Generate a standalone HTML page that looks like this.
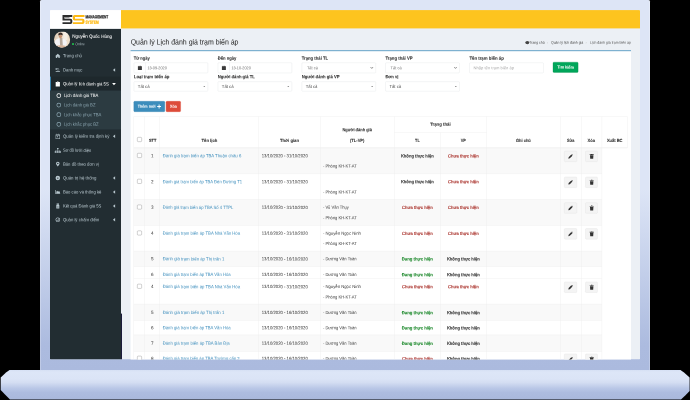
<!DOCTYPE html>
<html lang="vi">
<head>
<meta charset="utf-8">
<title>Quản lý Lịch đánh giá trạm biến áp</title>
<style>
html,body{margin:0;padding:0;background:#000;}
body{width:690px;height:400px;overflow:hidden;position:relative;font-family:"Liberation Sans",sans-serif;}
#root{position:absolute;left:0;top:0;width:690px;height:400px;overflow:hidden;background:#000;}
.frame{position:absolute;left:40px;top:0;width:610px;height:370.5px;border-radius:1.5px 1.5px 0 0;box-shadow:inset 0.6px 0 0 rgba(255,255,255,0.4),inset -0.6px 0 0 rgba(255,255,255,0.4);background:linear-gradient(to bottom,#dde5f6 0%,#dde5f6 51%,#acbbdf 93%,#abbade 100%);}
.base{position:absolute;left:0;top:369.6px;width:690px;height:30.4px;clip-path:polygon(10.2px 0,679.8px 0,684px 3px,689.6px 7.8px,689.6px 21.5px,685.5px 25.6px,681px 30px,10px 30px,5px 25px,0.7px 20.4px,0.7px 7.8px,6px 3px);background:linear-gradient(to bottom,#d6e0f4 0%,#dde6f7 7%,#dbe4f6 30%,#d3ddf2 42%,#b8c6e6 62%,#adbce0 75%,#a9b8dc 100%);}
#screen{position:absolute;left:0;top:0;display:block;font-family:"Liberation Sans",sans-serif;}
#screen{will-change:transform;}
#screen text{white-space:pre;text-rendering:geometricPrecision;}
</style>
</head>
<body>
<div id="root">
<div class="frame"></div>
<div class="base"></div>
<svg id="screen" width="690" height="400" viewBox="0 0 690 400">
<defs><clipPath id="scr"><rect x="50" y="10.1" width="590" height="349.4" rx="0.8"/></clipPath><clipPath id="avc"><circle cx="62.05" cy="39.6" r="8.1"/></clipPath><linearGradient id="avbg" x1="0" y1="0" x2="1" y2="0.25"><stop offset="0" stop-color="#d8c0a6"/><stop offset="0.45" stop-color="#efe4d5"/><stop offset="1" stop-color="#ecdcc6"/></linearGradient></defs>
<g clip-path="url(#scr)">
<rect x="50" y="10.1" width="590" height="349.4" fill="#ecf0f5"/>
<rect x="121" y="10.1" width="519" height="18.3" fill="#fdc41f"/>
<rect x="50" y="10.1" width="71" height="18.8" fill="#ffffff"/>
<rect x="50" y="28.9" width="71" height="330.6" fill="#222d32"/>
<path transform="translate(62.5 15.1) scale(0.1000)" d="M0 0H98V18H20V36H80Q98 36 98 54V71Q98 89 80 89H0V71H78V54H0Z" fill="#2d2d2d"/>
<path transform="translate(62.5 15.1) scale(0.1000)" d="M22 22H70V32H22Z" fill="#777"/>
<path transform="translate(72.8 15.1) scale(0.1000)" d="M18 0H117V18H22V36H99Q117 36 117 54V71Q117 89 99 89H0V71H95V54H18Q0 54 0 36V18Q0 0 18 0Z" fill="#fdb913"/>
<text x="85.4" y="18.3" font-size="4.3" fill="#2b2b2b" font-weight="700" textLength="22.8" lengthAdjust="spacingAndGlyphs" stroke="#2b2b2b" stroke-width="0.25" transform="rotate(0.05 85.4 18.3)">MANAGEMENT</text>
<text x="85.4" y="23.7" font-size="4.5" fill="#fdb913" font-weight="700" textLength="13.2" lengthAdjust="spacingAndGlyphs" stroke="#fdb913" stroke-width="0.25" transform="rotate(0.05 85.4 23.7)">SYSTEM</text>
<g clip-path="url(#avc)"><rect x="53.95" y="31.5" width="16.2" height="16.2" fill="url(#avbg)"/><rect x="63.5" y="31" width="4" height="9" fill="#f6f1ea" opacity="0.8"/><ellipse cx="60.6" cy="42.8" rx="6.3" ry="4.6" fill="#f3f3f5"/><path d="M59.7 38H62.3L62.8 45.8H60.1Z" fill="#a3907c" opacity="0.75"/><ellipse cx="60.5" cy="36.3" rx="1.55" ry="1.9" fill="#c4906f"/><path d="M58.3 35.6Q58.0 32.7 60.4 32.6Q63.0 32.6 62.7 35.4Q60.6 34.2 58.3 35.6Z" fill="#3a2c26"/><ellipse cx="60.8" cy="46.6" rx="4.6" ry="1.3" fill="#d6b297"/></g>
<text x="72.2" y="37.87" font-size="4.6" fill="#ffffff" textLength="39.8" lengthAdjust="spacingAndGlyphs" stroke="#ffffff" stroke-width="0.04" transform="rotate(0.05 72.2 37.87)">Nguyễn Quốc Hùng</text>
<rect x="72.0" y="43.0" width="2.0" height="2.1" rx="0.7" fill="#21b04b"/>
<text x="75.3" y="45.35" font-size="3.9" fill="#a9b8be" textLength="9.6" lengthAdjust="spacingAndGlyphs" transform="rotate(0.05 75.3 45.35)">Online</text>
<path transform="translate(55.1 53.5) scale(0.3000)" d="M9 1L0 9H2.5V15H7V10.5H11V15H15.5V9H18Z" fill="#b8c7ce" fill-rule="evenodd"/>
<text x="62.9" y="57.37" font-size="4.6" fill="#b8c7ce" textLength="19" lengthAdjust="spacingAndGlyphs" transform="rotate(0.05 62.9 57.37)">Trang chủ</text>
<path transform="translate(55.4 67.6) scale(0.3000)" d="M1 1H4V8H1ZM5 3H11V5H5ZM5 7H13V9H5ZM1 11H15V14H1Z" fill="#b8c7ce" fill-rule="evenodd"/>
<text x="62.9" y="71.47" font-size="4.6" fill="#b8c7ce" textLength="19.6" lengthAdjust="spacingAndGlyphs" transform="rotate(0.05 62.9 71.47)">Danh mục</text>
<path transform="translate(112.9 68.25) scale(0.3500)" d="M6.4 0V10L0 5Z" fill="#b8c7ce"/>
<rect x="50" y="76.6" width="71" height="14" fill="#1e282c"/>
<rect x="50" y="76.6" width="0.9" height="14" fill="#3c8dbc"/>
<path transform="translate(55.52 81.3) scale(0.3250)" d="M0.5 2.5H4.3Q4.8 0 7 0Q9.2 0 9.7 2.5H13.5V16H0.5ZM6 1.6V3.2H8V1.6Z" fill="#ffffff" fill-rule="evenodd"/>
<text x="62.9" y="85.37" font-size="4.6" fill="#ffffff" textLength="45.9" lengthAdjust="spacingAndGlyphs" transform="rotate(0.05 62.9 85.37)">Quản lý lịch đánh giá 5S</text>
<path transform="translate(112.1 82.9) scale(0.3800)" d="M0 0H10L5 6Z" fill="#ffffff"/>
<rect x="50" y="90.6" width="71" height="38.8" fill="#2c3b41"/>
<path transform="translate(56.35 93.15) scale(0.3063)" d="M8 0.4A7.6 7.6 0 1 0 8 15.6A7.6 7.6 0 1 0 8 0.4ZM8 2.7A5.3 5.3 0 1 1 8 13.3A5.3 5.3 0 1 1 8 2.7Z" fill="#ffffff" fill-rule="evenodd"/>
<text x="63.9" y="97.07" font-size="4.6" fill="#ffffff" textLength="34.5" lengthAdjust="spacingAndGlyphs" transform="rotate(0.05 63.9 97.07)">Lịch đánh giá TBA</text>
<path transform="translate(56.35 102.65) scale(0.3063)" d="M8 0.4A7.6 7.6 0 1 0 8 15.6A7.6 7.6 0 1 0 8 0.4ZM8 2.7A5.3 5.3 0 1 1 8 13.3A5.3 5.3 0 1 1 8 2.7Z" fill="#8aa4af" fill-rule="evenodd"/>
<text x="63.9" y="106.57" font-size="4.6" fill="#8aa4af" textLength="31.6" lengthAdjust="spacingAndGlyphs" transform="rotate(0.05 63.9 106.57)">Lịch đánh giá BZ</text>
<path transform="translate(56.35 112.25) scale(0.3063)" d="M8 0.4A7.6 7.6 0 1 0 8 15.6A7.6 7.6 0 1 0 8 0.4ZM8 2.7A5.3 5.3 0 1 1 8 13.3A5.3 5.3 0 1 1 8 2.7Z" fill="#8aa4af" fill-rule="evenodd"/>
<text x="63.9" y="116.17" font-size="4.6" fill="#8aa4af" textLength="37.5" lengthAdjust="spacingAndGlyphs" transform="rotate(0.05 63.9 116.17)">Lịch khắc phục TBA</text>
<path transform="translate(56.35 121.85) scale(0.3063)" d="M8 0.4A7.6 7.6 0 1 0 8 15.6A7.6 7.6 0 1 0 8 0.4ZM8 2.7A5.3 5.3 0 1 1 8 13.3A5.3 5.3 0 1 1 8 2.7Z" fill="#8aa4af" fill-rule="evenodd"/>
<text x="63.9" y="125.77" font-size="4.6" fill="#8aa4af" textLength="34.8" lengthAdjust="spacingAndGlyphs" transform="rotate(0.05 63.9 125.77)">Lịch khắc phục BZ</text>
<path transform="translate(55.35 133.7) scale(0.3059)" d="M1 2.4H15V17H1ZM2.5 5.6V15.5H13.5V5.6ZM5.2 8.2H8.4V11.4H5.2ZM4 0.4H5.7V3.4H4ZM10.3 0.4H12V3.4H10.3Z" fill="#b8c7ce" fill-rule="evenodd"/>
<text x="62.9" y="137.77" font-size="4.6" fill="#b8c7ce" textLength="46.5" lengthAdjust="spacingAndGlyphs" transform="rotate(0.05 62.9 137.77)">Quản lý kiểm tra định kỳ</text>
<path transform="translate(112.9 134.55) scale(0.3500)" d="M6.4 0V10L0 5Z" fill="#b8c7ce"/>
<path transform="translate(54.74 147.95) scale(0.3063)" d="M7.6 0H12.4V4.6H10.6V7.2H17.6V10.4H20V16H14.2V10.4H16.4V8.4H10.6V10.4H12.9V16H7.1V10.4H9.4V8.4H3.6V10.4H5.8V16H0V10.4H2.4V7.2H9.4V4.6H7.6Z" fill="#b8c7ce" fill-rule="evenodd"/>
<text x="62.9" y="151.87" font-size="4.6" fill="#b8c7ce" textLength="28.5" lengthAdjust="spacingAndGlyphs" transform="rotate(0.05 62.9 151.87)">Sơ đồ lưới điện</text>
<path transform="translate(56 161.8) scale(0.3000)" d="M6 0A6 6 0 0 1 12 6Q12 9 6 16Q0 9 0 6A6 6 0 0 1 6 0ZM6 3.5A2.5 2.5 0 1 0 6 8.5A2.5 2.5 0 1 0 6 3.5Z" fill="#b8c7ce" fill-rule="evenodd"/>
<text x="62.9" y="165.67" font-size="4.6" fill="#b8c7ce" textLength="36" lengthAdjust="spacingAndGlyphs" transform="rotate(0.05 62.9 165.67)">Bản đồ theo đơn vị</text>
<path transform="translate(55.4 175.7) scale(0.3000)" d="M8 0.5A7.5 7.5 0 1 0 8 15.5A7.5 7.5 0 1 0 8 0.5ZM8 5.6A2.4 2.4 0 1 1 8 10.4A2.4 2.4 0 1 1 8 5.6Z" fill="#b8c7ce" fill-rule="evenodd"/>
<text x="62.9" y="179.57" font-size="4.6" fill="#b8c7ce" textLength="33.5" lengthAdjust="spacingAndGlyphs" transform="rotate(0.05 62.9 179.57)">Quản trị hệ thống</text>
<path transform="translate(112.9 176.35) scale(0.3500)" d="M6.4 0V10L0 5Z" fill="#b8c7ce"/>
<path transform="translate(55.4 189.6) scale(0.3000)" d="M0 1H2V13H16V15H0ZM3 12V7L6 4L9 7L12 5L15 8V12Z" fill="#b8c7ce" fill-rule="evenodd"/>
<text x="62.9" y="193.47" font-size="4.6" fill="#b8c7ce" textLength="38.5" lengthAdjust="spacingAndGlyphs" transform="rotate(0.05 62.9 193.47)">Báo cáo và thống kê</text>
<path transform="translate(112.9 190.25) scale(0.3500)" d="M6.4 0V10L0 5Z" fill="#b8c7ce"/>
<path transform="translate(56 203.6) scale(0.3000)" d="M2 0H10V4H2ZM1 5H11V16H1ZM3 8V9H9V8ZM3 11V12H9V11Z" fill="#b8c7ce" fill-rule="evenodd"/>
<text x="62.9" y="207.47" font-size="4.6" fill="#b8c7ce" textLength="38.5" lengthAdjust="spacingAndGlyphs" transform="rotate(0.05 62.9 207.47)">Kết quả Đánh giá 5S</text>
<path transform="translate(112.9 204.25) scale(0.3500)" d="M6.4 0V10L0 5Z" fill="#b8c7ce"/>
<path transform="translate(55.4 217.4) scale(0.3000)" d="M8 0.4A7.6 7.6 0 1 0 8 15.6A7.6 7.6 0 1 0 8 0.4ZM8 2.4A5.6 5.6 0 1 1 8 13.6A5.6 5.6 0 1 1 8 2.4ZM11.3 3.3L12.7 4.7L8.7 8.7L7.3 7.3ZM3.5 10.2H12.5V11.8H3.5Z" fill="#b8c7ce" fill-rule="evenodd"/>
<text x="62.9" y="221.27" font-size="4.6" fill="#b8c7ce" textLength="36.5" lengthAdjust="spacingAndGlyphs" transform="rotate(0.05 62.9 221.27)">Quản lý chấm điểm</text>
<path transform="translate(112.9 218.05) scale(0.3500)" d="M6.4 0V10L0 5Z" fill="#b8c7ce"/>
<text x="130.7" y="44.53" font-size="7.6" fill="#333" textLength="107.8" lengthAdjust="spacingAndGlyphs" stroke="#333" stroke-width="0.06" transform="rotate(0.05 130.7 44.53)">Quản lý Lịch đánh giá trạm biến áp</text>
<ellipse cx="527.3" cy="42.6" rx="2.0" ry="1.6" fill="#444"/>
<text x="529.3" y="43.78" font-size="3.7" fill="#444" textLength="15.3" lengthAdjust="spacingAndGlyphs" transform="rotate(0.05 529.3 43.78)">Trang chủ</text>
<text x="546.8" y="43.68" font-size="3.7" fill="#bbb" transform="rotate(0.05 546.8 43.68)">›</text>
<text x="551" y="43.78" font-size="3.7" fill="#444" textLength="32.3" lengthAdjust="spacingAndGlyphs" transform="rotate(0.05 551 43.78)">Quản lý lịch đánh giá</text>
<text x="585.6" y="43.68" font-size="3.7" fill="#bbb" transform="rotate(0.05 585.6 43.68)">›</text>
<text x="590" y="43.78" font-size="3.7" fill="#555" textLength="41" lengthAdjust="spacingAndGlyphs" transform="rotate(0.05 590 43.78)">Lịch đánh giá trạm biến áp</text>
<rect x="130.6" y="50.9" width="500.4" height="310.6" fill="#ffffff"/>
<rect x="130.6" y="50.1" width="500.4" height="1.1" fill="#72aacd"/>
<text x="133.8" y="59.67" font-size="4.6" fill="#333" font-weight="700" textLength="16" lengthAdjust="spacingAndGlyphs" stroke="#333" stroke-width="0.07" transform="rotate(0.05 133.8 59.67)">Từ ngày</text>
<rect x="133.95" y="62.75" width="73.9" height="10.2" fill="#fff" rx="0.7" stroke="#dadde3" stroke-width="0.31"/>
<rect x="145.35" y="62.6" width="0.31" height="10.5" fill="#dadde3"/>
<path transform="translate(137.9 65.65) scale(0.2850)" d="M0 2H14V15H0ZM3 0H5V3H3ZM9 0H11V3H9Z" fill="#3a3a3a"/>
<text x="147.4" y="69.23" font-size="4" fill="#666" textLength="19.4" lengthAdjust="spacingAndGlyphs" transform="rotate(0.05 147.4 69.23)">13-09-2020</text>
<text x="217.8" y="59.67" font-size="4.6" fill="#333" font-weight="700" textLength="18.6" lengthAdjust="spacingAndGlyphs" stroke="#333" stroke-width="0.07" transform="rotate(0.05 217.8 59.67)">Đến ngày</text>
<rect x="217.95" y="62.75" width="73.9" height="10.2" fill="#fff" rx="0.7" stroke="#dadde3" stroke-width="0.31"/>
<rect x="229.35" y="62.6" width="0.31" height="10.5" fill="#dadde3"/>
<path transform="translate(221.9 65.65) scale(0.2850)" d="M0 2H14V15H0ZM3 0H5V3H3ZM9 0H11V3H9Z" fill="#3a3a3a"/>
<text x="231.4" y="69.23" font-size="4" fill="#666" textLength="19.4" lengthAdjust="spacingAndGlyphs" transform="rotate(0.05 231.4 69.23)">13-10-2020</text>
<text x="301.7" y="59.67" font-size="4.6" fill="#333" font-weight="700" textLength="26.5" lengthAdjust="spacingAndGlyphs" stroke="#333" stroke-width="0.07" transform="rotate(0.05 301.7 59.67)">Trạng thái TL</text>
<rect x="301.85" y="62.75" width="73.9" height="10.2" fill="#fff" rx="0.7" stroke="#dadde3" stroke-width="0.31"/>
<text x="306.9" y="69.34" font-size="4.2" fill="#777" textLength="11" lengthAdjust="spacingAndGlyphs" transform="rotate(0.05 306.9 69.34)">Tất cả</text>
<path transform="translate(370.5 67.05) scale(0.26)" d="M0.8 0.8L5 5L9.2 0.8" fill="none" stroke="#222" stroke-width="2.4"/>
<text x="385.4" y="59.67" font-size="4.6" fill="#333" font-weight="700" textLength="27.3" lengthAdjust="spacingAndGlyphs" stroke="#333" stroke-width="0.07" transform="rotate(0.05 385.4 59.67)">Trạng thái VP</text>
<rect x="385.55" y="62.75" width="73.9" height="10.2" fill="#fff" rx="0.7" stroke="#dadde3" stroke-width="0.31"/>
<text x="390.6" y="69.34" font-size="4.2" fill="#777" textLength="11" lengthAdjust="spacingAndGlyphs" transform="rotate(0.05 390.6 69.34)">Tất cả</text>
<path transform="translate(454.2 67.05) scale(0.26)" d="M0.8 0.8L5 5L9.2 0.8" fill="none" stroke="#222" stroke-width="2.4"/>
<text x="469.4" y="59.67" font-size="4.6" fill="#333" font-weight="700" textLength="34.5" lengthAdjust="spacingAndGlyphs" stroke="#333" stroke-width="0.07" transform="rotate(0.05 469.4 59.67)">Tên trạm biến áp</text>
<rect x="469.55" y="62.75" width="73.9" height="10.2" fill="#fff" rx="0.7" stroke="#dadde3" stroke-width="0.31"/>
<text x="473.5" y="69.23" font-size="4" fill="#aaa" textLength="40.5" lengthAdjust="spacingAndGlyphs" transform="rotate(0.05 473.5 69.23)">Nhập tên trạm biến áp</text>
<rect x="553" y="62.2" width="25.1" height="10.2" fill="#00a65a" rx="0.9" stroke="#008d4c" stroke-width="0.3"/>
<text x="565.55" y="68.64" font-size="4.2" fill="#fff" font-weight="700" text-anchor="middle" textLength="16.6" lengthAdjust="spacingAndGlyphs" stroke="#fff" stroke-width="0.03" transform="rotate(0.05 565.55 68.64)">Tìm kiếm</text>
<text x="133.8" y="78.17" font-size="4.6" fill="#333" font-weight="700" textLength="35.7" lengthAdjust="spacingAndGlyphs" stroke="#333" stroke-width="0.07" transform="rotate(0.05 133.8 78.17)">Loại trạm biến áp</text>
<rect x="133.95" y="81.65" width="73.9" height="9.6" fill="#fff" rx="0.7" stroke="#dadde3" stroke-width="0.31"/>
<text x="137.8" y="88.01" font-size="4.4" fill="#444" textLength="11.8" lengthAdjust="spacingAndGlyphs" transform="rotate(0.05 137.8 88.01)">Tất cả</text>
<path transform="translate(203.3 86.05) scale(0.1900)" d="M0 0H10L5 5Z" fill="#666"/>
<text x="217.8" y="78.17" font-size="4.6" fill="#333" font-weight="700" textLength="37" lengthAdjust="spacingAndGlyphs" stroke="#333" stroke-width="0.07" transform="rotate(0.05 217.8 78.17)">Người đánh giá TL</text>
<rect x="217.95" y="81.65" width="73.9" height="9.6" fill="#fff" rx="0.7" stroke="#dadde3" stroke-width="0.31"/>
<text x="221.8" y="88.01" font-size="4.4" fill="#444" textLength="11.8" lengthAdjust="spacingAndGlyphs" transform="rotate(0.05 221.8 88.01)">Tất cả</text>
<path transform="translate(287.3 86.05) scale(0.1900)" d="M0 0H10L5 5Z" fill="#666"/>
<text x="301.7" y="78.17" font-size="4.6" fill="#333" font-weight="700" textLength="37.8" lengthAdjust="spacingAndGlyphs" stroke="#333" stroke-width="0.07" transform="rotate(0.05 301.7 78.17)">Người đánh giá VP</text>
<rect x="301.85" y="81.65" width="73.9" height="9.6" fill="#fff" rx="0.7" stroke="#dadde3" stroke-width="0.31"/>
<text x="305.7" y="88.01" font-size="4.4" fill="#444" textLength="11.8" lengthAdjust="spacingAndGlyphs" transform="rotate(0.05 305.7 88.01)">Tất cả</text>
<path transform="translate(371.2 86.05) scale(0.1900)" d="M0 0H10L5 5Z" fill="#666"/>
<text x="385.4" y="78.17" font-size="4.6" fill="#333" font-weight="700" textLength="13" lengthAdjust="spacingAndGlyphs" stroke="#333" stroke-width="0.07" transform="rotate(0.05 385.4 78.17)">Đơn vị</text>
<rect x="385.55" y="81.65" width="73.9" height="9.6" fill="#fff" rx="0.7" stroke="#dadde3" stroke-width="0.31"/>
<text x="389.4" y="88.01" font-size="4.4" fill="#444" textLength="11.8" lengthAdjust="spacingAndGlyphs" transform="rotate(0.05 389.4 88.01)">Tất cả</text>
<path transform="translate(454.9 86.05) scale(0.1900)" d="M0 0H10L5 5Z" fill="#666"/>
<rect x="133.8" y="101.3" width="31" height="10.4" fill="#3c8dbc" rx="0.9" stroke="#367fa9" stroke-width="0.3"/>
<text x="137.8" y="107.84" font-size="4.2" fill="#fff" font-weight="700" textLength="17.8" lengthAdjust="spacingAndGlyphs" stroke="#fff" stroke-width="0.03" transform="rotate(0.05 137.8 107.84)">Thêm mới</text>
<path transform="translate(157.2 104.6) scale(0.3800)" d="M3.8 0H6.2V3.8H10V6.2H6.2V10H3.8V6.2H0V3.8H3.8Z" fill="#fff"/>
<rect x="166.1" y="101.3" width="14.5" height="10.4" fill="#dd4b39" rx="0.9" stroke="#d73925" stroke-width="0.3"/>
<text x="173.35" y="107.84" font-size="4.2" fill="#fff" font-weight="700" text-anchor="middle" textLength="6.8" lengthAdjust="spacingAndGlyphs" stroke="#fff" stroke-width="0.03" transform="rotate(0.05 173.35 107.84)">Xóa</text>
<rect x="133.8" y="116.3" width="493.5" height="0.4" fill="#ededed"/>
<rect x="133.8" y="147.45" width="493.5" height="0.8" fill="#eeeeee"/>
<rect x="394.3" y="132.4" width="92.3" height="0.4" fill="#ededed"/>
<text x="152.6" y="141.81" font-size="4.1" fill="#333" font-weight="700" text-anchor="middle" textLength="7.3" lengthAdjust="spacingAndGlyphs" stroke="#333" stroke-width="0.14" transform="rotate(0.05 152.6 141.81)">STT</text>
<rect x="137.35" y="137.35" width="4.3" height="4.3" fill="#fff" rx="0.8" stroke="#767676" stroke-width="0.33"/>
<text x="209.4" y="141.94" font-size="4.5" fill="#333" font-weight="700" text-anchor="middle" textLength="15.7" lengthAdjust="spacingAndGlyphs" stroke="#333" stroke-width="0.07" transform="rotate(0.05 209.4 141.94)">Tên lịch</text>
<text x="289.5" y="141.94" font-size="4.5" fill="#333" font-weight="700" text-anchor="middle" textLength="19" lengthAdjust="spacingAndGlyphs" stroke="#333" stroke-width="0.07" transform="rotate(0.05 289.5 141.94)">Thời gian</text>
<text x="357.2" y="131.24" font-size="4.5" fill="#333" font-weight="700" text-anchor="middle" textLength="29.5" lengthAdjust="spacingAndGlyphs" stroke="#333" stroke-width="0.07" transform="rotate(0.05 357.2 131.24)">Người đánh giá</text>
<text x="357.2" y="141.94" font-size="4.5" fill="#333" font-weight="700" text-anchor="middle" textLength="14.5" lengthAdjust="spacingAndGlyphs" stroke="#333" stroke-width="0.07" transform="rotate(0.05 357.2 141.94)">(TL-VP)</text>
<text x="440.4" y="125.74" font-size="4.5" fill="#333" font-weight="700" text-anchor="middle" textLength="20.5" lengthAdjust="spacingAndGlyphs" stroke="#333" stroke-width="0.07" transform="rotate(0.05 440.4 125.74)">Trạng thái</text>
<text x="417.4" y="141.94" font-size="4.5" fill="#333" font-weight="700" text-anchor="middle" textLength="4.6" lengthAdjust="spacingAndGlyphs" stroke="#333" stroke-width="0.07" transform="rotate(0.05 417.4 141.94)">TL</text>
<text x="463.3" y="141.94" font-size="4.5" fill="#333" font-weight="700" text-anchor="middle" textLength="5.2" lengthAdjust="spacingAndGlyphs" stroke="#333" stroke-width="0.07" transform="rotate(0.05 463.3 141.94)">VP</text>
<text x="523.4" y="141.94" font-size="4.5" fill="#333" font-weight="700" text-anchor="middle" textLength="14.8" lengthAdjust="spacingAndGlyphs" stroke="#333" stroke-width="0.07" transform="rotate(0.05 523.4 141.94)">Ghi chú</text>
<text x="570.7" y="141.94" font-size="4.5" fill="#333" font-weight="700" text-anchor="middle" textLength="7.4" lengthAdjust="spacingAndGlyphs" stroke="#333" stroke-width="0.07" transform="rotate(0.05 570.7 141.94)">Sửa</text>
<text x="591.3" y="141.94" font-size="4.5" fill="#333" font-weight="700" text-anchor="middle" textLength="7.4" lengthAdjust="spacingAndGlyphs" stroke="#333" stroke-width="0.07" transform="rotate(0.05 591.3 141.94)">Xóa</text>
<text x="614.7" y="141.94" font-size="4.5" fill="#333" font-weight="700" text-anchor="middle" textLength="15.6" lengthAdjust="spacingAndGlyphs" stroke="#333" stroke-width="0.07" transform="rotate(0.05 614.7 141.94)">Xuất BC</text>
<rect x="133.8" y="148.1" width="468.1" height="25.75" fill="#f9f9f9"/>
<rect x="133.8" y="147.9" width="468.1" height="0.4" fill="#ededed"/>
<rect x="137.35" y="153.3" width="4.3" height="4.3" fill="#fff" rx="0.8" stroke="#767676" stroke-width="0.33"/>
<text x="152.2" y="157.27" font-size="4.6" fill="#333" text-anchor="middle" transform="rotate(0.05 152.2 157.27)">1</text>
<text x="162.7" y="157.27" font-size="4.6" fill="#3c8dbc" textLength="78.6" lengthAdjust="spacingAndGlyphs" transform="rotate(0.05 162.7 157.27)">Đánh giá trạm biến áp TBA Thuận châu 6</text>
<text x="261.7" y="157.27" font-size="4.6" fill="#333" textLength="46.1" lengthAdjust="spacingAndGlyphs" transform="rotate(0.05 261.7 157.27)">13/10/2020 - 31/10/2020</text>
<text x="322.9" y="167.59" font-size="4.5" fill="#333" textLength="33.9" lengthAdjust="spacingAndGlyphs" transform="rotate(0.05 322.9 167.59)">- Phòng KH-KT-AT</text>
<text x="417.35" y="157.47" font-size="4.6" fill="#333" font-weight="700" text-anchor="middle" textLength="32.9" lengthAdjust="spacingAndGlyphs" stroke="#333" stroke-width="0.07" transform="rotate(0.05 417.35 157.47)">Không thực hiện</text>
<text x="463.35" y="157.47" font-size="4.6" fill="#ad3a34" font-weight="700" text-anchor="middle" textLength="30.6" lengthAdjust="spacingAndGlyphs" stroke="#ad3a34" stroke-width="0.07" transform="rotate(0.05 463.35 157.47)">Chưa thực hiện</text>
<rect x="564.3" y="151.1" width="12.5" height="10.6" fill="#f4f4f4" rx="0.9" stroke="#ddd" stroke-width="0.31"/>
<path transform="translate(568.3 154.1) scale(0.3800)" d="M0 12L0.9 8L7.9 1L11 4.1L4 11.1ZM8.7 0.4Q9.6 -0.4 10.5 0.4L11.6 1.5Q12.4 2.4 11.6 3.3L8.7 0.4Z" fill="#333"/>
<rect x="585.45" y="151.1" width="12" height="10.6" fill="#f4f4f4" rx="0.9" stroke="#ddd" stroke-width="0.31"/>
<path transform="translate(589.65 153.9) scale(0.4100)" d="M3.5 0H6.5L7 1H10V2.6H0V1H3ZM0.8 3.4H9.2L8.6 12H1.4Z" fill="#333"/>
<rect x="133.8" y="173.65" width="468.1" height="0.4" fill="#ededed"/>
<rect x="137.35" y="179.2" width="4.3" height="4.3" fill="#fff" rx="0.8" stroke="#767676" stroke-width="0.33"/>
<text x="152.2" y="183.17" font-size="4.6" fill="#333" text-anchor="middle" transform="rotate(0.05 152.2 183.17)">2</text>
<text x="162.7" y="183.17" font-size="4.6" fill="#3c8dbc" textLength="79.4" lengthAdjust="spacingAndGlyphs" transform="rotate(0.05 162.7 183.17)">Đánh giá trạm biến áp TBA Đèn Đường T1</text>
<text x="261.7" y="183.17" font-size="4.6" fill="#333" textLength="46.1" lengthAdjust="spacingAndGlyphs" transform="rotate(0.05 261.7 183.17)">13/10/2020 - 31/10/2020</text>
<text x="322.9" y="193.49" font-size="4.5" fill="#333" textLength="33.9" lengthAdjust="spacingAndGlyphs" transform="rotate(0.05 322.9 193.49)">- Phòng KH-KT-AT</text>
<text x="417.35" y="183.37" font-size="4.6" fill="#333" font-weight="700" text-anchor="middle" textLength="32.9" lengthAdjust="spacingAndGlyphs" stroke="#333" stroke-width="0.07" transform="rotate(0.05 417.35 183.37)">Không thực hiện</text>
<text x="463.35" y="183.37" font-size="4.6" fill="#ad3a34" font-weight="700" text-anchor="middle" textLength="30.6" lengthAdjust="spacingAndGlyphs" stroke="#ad3a34" stroke-width="0.07" transform="rotate(0.05 463.35 183.37)">Chưa thực hiện</text>
<rect x="564.3" y="177" width="12.5" height="10.6" fill="#f4f4f4" rx="0.9" stroke="#ddd" stroke-width="0.31"/>
<path transform="translate(568.3 180) scale(0.3800)" d="M0 12L0.9 8L7.9 1L11 4.1L4 11.1ZM8.7 0.4Q9.6 -0.4 10.5 0.4L11.6 1.5Q12.4 2.4 11.6 3.3L8.7 0.4Z" fill="#333"/>
<rect x="585.45" y="177" width="12" height="10.6" fill="#f4f4f4" rx="0.9" stroke="#ddd" stroke-width="0.31"/>
<path transform="translate(589.65 179.8) scale(0.4100)" d="M3.5 0H6.5L7 1H10V2.6H0V1H3ZM0.8 3.4H9.2L8.6 12H1.4Z" fill="#333"/>
<rect x="133.8" y="199.5" width="468.1" height="25.9" fill="#f9f9f9"/>
<rect x="133.8" y="199.3" width="468.1" height="0.4" fill="#ededed"/>
<rect x="137.35" y="204.9" width="4.3" height="4.3" fill="#fff" rx="0.8" stroke="#767676" stroke-width="0.33"/>
<text x="152.2" y="208.87" font-size="4.6" fill="#333" text-anchor="middle" transform="rotate(0.05 152.2 208.87)">3</text>
<text x="162.7" y="208.87" font-size="4.6" fill="#3c8dbc" textLength="70.6" lengthAdjust="spacingAndGlyphs" transform="rotate(0.05 162.7 208.87)">Đánh giá trạm biến áp TBA Số 4 TTPL</text>
<text x="261.7" y="208.87" font-size="4.6" fill="#333" textLength="46.1" lengthAdjust="spacingAndGlyphs" transform="rotate(0.05 261.7 208.87)">13/10/2020 - 31/10/2020</text>
<text x="322.9" y="208.84" font-size="4.5" fill="#333" textLength="26" lengthAdjust="spacingAndGlyphs" transform="rotate(0.05 322.9 208.84)">- Vũ Văn Thụy</text>
<text x="322.9" y="219.19" font-size="4.5" fill="#333" textLength="33.9" lengthAdjust="spacingAndGlyphs" transform="rotate(0.05 322.9 219.19)">- Phòng KH-KT-AT</text>
<text x="417.35" y="209.07" font-size="4.6" fill="#ad3a34" font-weight="700" text-anchor="middle" textLength="30.6" lengthAdjust="spacingAndGlyphs" stroke="#ad3a34" stroke-width="0.07" transform="rotate(0.05 417.35 209.07)">Chưa thực hiện</text>
<text x="463.35" y="209.07" font-size="4.6" fill="#ad3a34" font-weight="700" text-anchor="middle" textLength="30.6" lengthAdjust="spacingAndGlyphs" stroke="#ad3a34" stroke-width="0.07" transform="rotate(0.05 463.35 209.07)">Chưa thực hiện</text>
<rect x="564.3" y="202.7" width="12.5" height="10.6" fill="#f4f4f4" rx="0.9" stroke="#ddd" stroke-width="0.31"/>
<path transform="translate(568.3 205.7) scale(0.3800)" d="M0 12L0.9 8L7.9 1L11 4.1L4 11.1ZM8.7 0.4Q9.6 -0.4 10.5 0.4L11.6 1.5Q12.4 2.4 11.6 3.3L8.7 0.4Z" fill="#333"/>
<rect x="585.45" y="202.7" width="12" height="10.6" fill="#f4f4f4" rx="0.9" stroke="#ddd" stroke-width="0.31"/>
<path transform="translate(589.65 205.5) scale(0.4100)" d="M3.5 0H6.5L7 1H10V2.6H0V1H3ZM0.8 3.4H9.2L8.6 12H1.4Z" fill="#333"/>
<rect x="133.8" y="225.2" width="468.1" height="0.4" fill="#ededed"/>
<rect x="137.35" y="230.8" width="4.3" height="4.3" fill="#fff" rx="0.8" stroke="#767676" stroke-width="0.33"/>
<text x="152.2" y="234.77" font-size="4.6" fill="#333" text-anchor="middle" transform="rotate(0.05 152.2 234.77)">4</text>
<text x="162.7" y="234.77" font-size="4.6" fill="#3c8dbc" textLength="77.4" lengthAdjust="spacingAndGlyphs" transform="rotate(0.05 162.7 234.77)">Đánh giá trạm biến áp TBA Nhà Văn Hóa</text>
<text x="261.7" y="234.77" font-size="4.6" fill="#333" textLength="46.1" lengthAdjust="spacingAndGlyphs" transform="rotate(0.05 261.7 234.77)">13/10/2020 - 31/10/2020</text>
<text x="322.9" y="234.74" font-size="4.5" fill="#333" textLength="38" lengthAdjust="spacingAndGlyphs" transform="rotate(0.05 322.9 234.74)">- Nguyễn Ngọc Ninh</text>
<text x="322.9" y="245.09" font-size="4.5" fill="#333" textLength="33.9" lengthAdjust="spacingAndGlyphs" transform="rotate(0.05 322.9 245.09)">- Phòng KH-KT-AT</text>
<text x="417.35" y="234.97" font-size="4.6" fill="#ad3a34" font-weight="700" text-anchor="middle" textLength="30.6" lengthAdjust="spacingAndGlyphs" stroke="#ad3a34" stroke-width="0.07" transform="rotate(0.05 417.35 234.97)">Chưa thực hiện</text>
<text x="463.35" y="234.97" font-size="4.6" fill="#ad3a34" font-weight="700" text-anchor="middle" textLength="30.6" lengthAdjust="spacingAndGlyphs" stroke="#ad3a34" stroke-width="0.07" transform="rotate(0.05 463.35 234.97)">Chưa thực hiện</text>
<rect x="564.3" y="228.6" width="12.5" height="10.6" fill="#f4f4f4" rx="0.9" stroke="#ddd" stroke-width="0.31"/>
<path transform="translate(568.3 231.6) scale(0.3800)" d="M0 12L0.9 8L7.9 1L11 4.1L4 11.1ZM8.7 0.4Q9.6 -0.4 10.5 0.4L11.6 1.5Q12.4 2.4 11.6 3.3L8.7 0.4Z" fill="#333"/>
<rect x="585.45" y="228.6" width="12" height="10.6" fill="#f4f4f4" rx="0.9" stroke="#ddd" stroke-width="0.31"/>
<path transform="translate(589.65 231.4) scale(0.4100)" d="M3.5 0H6.5L7 1H10V2.6H0V1H3ZM0.8 3.4H9.2L8.6 12H1.4Z" fill="#333"/>
<rect x="133.8" y="251.1" width="468.1" height="15.4" fill="#f9f9f9"/>
<rect x="133.8" y="250.9" width="468.1" height="0.4" fill="#ededed"/>
<text x="152.2" y="260.37" font-size="4.6" fill="#333" text-anchor="middle" transform="rotate(0.05 152.2 260.37)">5</text>
<text x="162.7" y="260.37" font-size="4.6" fill="#3c8dbc" textLength="61.6" lengthAdjust="spacingAndGlyphs" transform="rotate(0.05 162.7 260.37)">Đánh giá trạm biến áp Thị trấn 1</text>
<text x="261.7" y="260.37" font-size="4.6" fill="#333" textLength="46.1" lengthAdjust="spacingAndGlyphs" transform="rotate(0.05 261.7 260.37)">13/10/2020 - 16/10/2020</text>
<text x="322.9" y="260.34" font-size="4.5" fill="#333" textLength="33.6" lengthAdjust="spacingAndGlyphs" transform="rotate(0.05 322.9 260.34)">- Dương Văn Toàn</text>
<text x="417.35" y="260.57" font-size="4.6" fill="#1f8a2e" font-weight="700" text-anchor="middle" textLength="31.2" lengthAdjust="spacingAndGlyphs" stroke="#1f8a2e" stroke-width="0.07" transform="rotate(0.05 417.35 260.57)">Đang thực hiện</text>
<text x="463.35" y="260.57" font-size="4.6" fill="#333" font-weight="700" text-anchor="middle" textLength="32.9" lengthAdjust="spacingAndGlyphs" stroke="#333" stroke-width="0.07" transform="rotate(0.05 463.35 260.57)">Không thực hiện</text>
<rect x="133.8" y="266.3" width="468.1" height="0.4" fill="#ededed"/>
<text x="152.2" y="276.07" font-size="4.6" fill="#333" text-anchor="middle" transform="rotate(0.05 152.2 276.07)">6</text>
<text x="162.7" y="276.07" font-size="4.6" fill="#3c8dbc" textLength="68" lengthAdjust="spacingAndGlyphs" transform="rotate(0.05 162.7 276.07)">Đánh giá trạm biến áp TBA Văn Hóa</text>
<text x="261.7" y="276.07" font-size="4.6" fill="#333" textLength="46.1" lengthAdjust="spacingAndGlyphs" transform="rotate(0.05 261.7 276.07)">13/10/2020 - 16/10/2020</text>
<text x="322.9" y="276.04" font-size="4.5" fill="#333" textLength="33.6" lengthAdjust="spacingAndGlyphs" transform="rotate(0.05 322.9 276.04)">- Dương Văn Toàn</text>
<text x="417.35" y="276.27" font-size="4.6" fill="#1f8a2e" font-weight="700" text-anchor="middle" textLength="31.2" lengthAdjust="spacingAndGlyphs" stroke="#1f8a2e" stroke-width="0.07" transform="rotate(0.05 417.35 276.27)">Đang thực hiện</text>
<text x="463.35" y="276.27" font-size="4.6" fill="#333" font-weight="700" text-anchor="middle" textLength="32.9" lengthAdjust="spacingAndGlyphs" stroke="#333" stroke-width="0.07" transform="rotate(0.05 463.35 276.27)">Không thực hiện</text>
<rect x="133.8" y="278.5" width="468.1" height="25.6" fill="#ffffff"/>
<rect x="133.8" y="278.3" width="468.1" height="0.4" fill="#ededed"/>
<rect x="137.35" y="284.15" width="4.3" height="4.3" fill="#fff" rx="0.8" stroke="#767676" stroke-width="0.33"/>
<text x="152.2" y="288.12" font-size="4.6" fill="#333" text-anchor="middle" transform="rotate(0.05 152.2 288.12)">4</text>
<text x="162.7" y="288.12" font-size="4.6" fill="#3c8dbc" textLength="77.4" lengthAdjust="spacingAndGlyphs" transform="rotate(0.05 162.7 288.12)">Đánh giá trạm biến áp TBA Nhà Văn Hóa</text>
<text x="261.7" y="288.12" font-size="4.6" fill="#333" textLength="46.1" lengthAdjust="spacingAndGlyphs" transform="rotate(0.05 261.7 288.12)">13/10/2020 - 31/10/2020</text>
<text x="322.9" y="288.09" font-size="4.5" fill="#333" textLength="38" lengthAdjust="spacingAndGlyphs" transform="rotate(0.05 322.9 288.09)">- Nguyễn Ngọc Ninh</text>
<text x="322.9" y="298.44" font-size="4.5" fill="#333" textLength="33.9" lengthAdjust="spacingAndGlyphs" transform="rotate(0.05 322.9 298.44)">- Phòng KH-KT-AT</text>
<text x="417.35" y="288.32" font-size="4.6" fill="#ad3a34" font-weight="700" text-anchor="middle" textLength="30.6" lengthAdjust="spacingAndGlyphs" stroke="#ad3a34" stroke-width="0.07" transform="rotate(0.05 417.35 288.32)">Chưa thực hiện</text>
<text x="463.35" y="288.32" font-size="4.6" fill="#ad3a34" font-weight="700" text-anchor="middle" textLength="30.6" lengthAdjust="spacingAndGlyphs" stroke="#ad3a34" stroke-width="0.07" transform="rotate(0.05 463.35 288.32)">Chưa thực hiện</text>
<rect x="564.3" y="281.95" width="12.5" height="10.6" fill="#f4f4f4" rx="0.9" stroke="#ddd" stroke-width="0.31"/>
<path transform="translate(568.3 284.95) scale(0.3800)" d="M0 12L0.9 8L7.9 1L11 4.1L4 11.1ZM8.7 0.4Q9.6 -0.4 10.5 0.4L11.6 1.5Q12.4 2.4 11.6 3.3L8.7 0.4Z" fill="#333"/>
<rect x="585.45" y="281.95" width="12" height="10.6" fill="#f4f4f4" rx="0.9" stroke="#ddd" stroke-width="0.31"/>
<path transform="translate(589.65 284.75) scale(0.4100)" d="M3.5 0H6.5L7 1H10V2.6H0V1H3ZM0.8 3.4H9.2L8.6 12H1.4Z" fill="#333"/>
<rect x="133.8" y="304.1" width="468.1" height="16.2" fill="#f9f9f9"/>
<rect x="133.8" y="303.9" width="468.1" height="0.4" fill="#ededed"/>
<text x="152.2" y="313.97" font-size="4.6" fill="#333" text-anchor="middle" transform="rotate(0.05 152.2 313.97)">5</text>
<text x="162.7" y="313.97" font-size="4.6" fill="#3c8dbc" textLength="61.6" lengthAdjust="spacingAndGlyphs" transform="rotate(0.05 162.7 313.97)">Đánh giá trạm biến áp Thị trấn 1</text>
<text x="261.7" y="313.97" font-size="4.6" fill="#333" textLength="46.1" lengthAdjust="spacingAndGlyphs" transform="rotate(0.05 261.7 313.97)">13/10/2020 - 16/10/2020</text>
<text x="322.9" y="313.94" font-size="4.5" fill="#333" textLength="33.6" lengthAdjust="spacingAndGlyphs" transform="rotate(0.05 322.9 313.94)">- Dương Văn Toàn</text>
<text x="417.35" y="314.17" font-size="4.6" fill="#1f8a2e" font-weight="700" text-anchor="middle" textLength="31.2" lengthAdjust="spacingAndGlyphs" stroke="#1f8a2e" stroke-width="0.07" transform="rotate(0.05 417.35 314.17)">Đang thực hiện</text>
<text x="463.35" y="314.17" font-size="4.6" fill="#333" font-weight="700" text-anchor="middle" textLength="32.9" lengthAdjust="spacingAndGlyphs" stroke="#333" stroke-width="0.07" transform="rotate(0.05 463.35 314.17)">Không thực hiện</text>
<rect x="133.8" y="320.1" width="468.1" height="0.4" fill="#ededed"/>
<text x="152.2" y="329.32" font-size="4.6" fill="#333" text-anchor="middle" transform="rotate(0.05 152.2 329.32)">6</text>
<text x="162.7" y="329.32" font-size="4.6" fill="#3c8dbc" textLength="68" lengthAdjust="spacingAndGlyphs" transform="rotate(0.05 162.7 329.32)">Đánh giá trạm biến áp TBA Văn Hóa</text>
<text x="261.7" y="329.32" font-size="4.6" fill="#333" textLength="46.1" lengthAdjust="spacingAndGlyphs" transform="rotate(0.05 261.7 329.32)">13/10/2020 - 16/10/2020</text>
<text x="322.9" y="329.29" font-size="4.5" fill="#333" textLength="33.6" lengthAdjust="spacingAndGlyphs" transform="rotate(0.05 322.9 329.29)">- Dương Văn Toàn</text>
<text x="417.35" y="329.52" font-size="4.6" fill="#1f8a2e" font-weight="700" text-anchor="middle" textLength="31.2" lengthAdjust="spacingAndGlyphs" stroke="#1f8a2e" stroke-width="0.07" transform="rotate(0.05 417.35 329.52)">Đang thực hiện</text>
<text x="463.35" y="329.52" font-size="4.6" fill="#333" font-weight="700" text-anchor="middle" textLength="32.9" lengthAdjust="spacingAndGlyphs" stroke="#333" stroke-width="0.07" transform="rotate(0.05 463.35 329.52)">Không thực hiện</text>
<rect x="133.8" y="334.9" width="468.1" height="16.5" fill="#f9f9f9"/>
<rect x="133.8" y="334.7" width="468.1" height="0.4" fill="#ededed"/>
<text x="152.2" y="344.77" font-size="4.6" fill="#333" text-anchor="middle" transform="rotate(0.05 152.2 344.77)">7</text>
<text x="162.7" y="344.77" font-size="4.6" fill="#3c8dbc" textLength="67" lengthAdjust="spacingAndGlyphs" transform="rotate(0.05 162.7 344.77)">Đánh giá trạm biến áp TBA Bản Địa</text>
<text x="261.7" y="344.77" font-size="4.6" fill="#333" textLength="46.1" lengthAdjust="spacingAndGlyphs" transform="rotate(0.05 261.7 344.77)">13/10/2020 - 16/10/2020</text>
<text x="322.9" y="344.74" font-size="4.5" fill="#333" textLength="33.6" lengthAdjust="spacingAndGlyphs" transform="rotate(0.05 322.9 344.74)">- Dương Văn Toàn</text>
<text x="417.35" y="344.97" font-size="4.6" fill="#1f8a2e" font-weight="700" text-anchor="middle" textLength="31.2" lengthAdjust="spacingAndGlyphs" stroke="#1f8a2e" stroke-width="0.07" transform="rotate(0.05 417.35 344.97)">Đang thực hiện</text>
<text x="463.35" y="344.97" font-size="4.6" fill="#333" font-weight="700" text-anchor="middle" textLength="32.9" lengthAdjust="spacingAndGlyphs" stroke="#333" stroke-width="0.07" transform="rotate(0.05 463.35 344.97)">Không thực hiện</text>
<rect x="133.8" y="351.2" width="468.1" height="0.4" fill="#ededed"/>
<rect x="137.35" y="356.1" width="4.3" height="4.3" fill="#fff" rx="0.8" stroke="#767676" stroke-width="0.33"/>
<text x="152.2" y="360.07" font-size="4.6" fill="#333" text-anchor="middle" transform="rotate(0.05 152.2 360.07)">8</text>
<text x="162.7" y="360.07" font-size="4.6" fill="#3c8dbc" textLength="77" lengthAdjust="spacingAndGlyphs" transform="rotate(0.05 162.7 360.07)">Đánh giá trạm biến áp TBA Trường cấp 2</text>
<text x="261.7" y="360.07" font-size="4.6" fill="#333" textLength="46.1" lengthAdjust="spacingAndGlyphs" transform="rotate(0.05 261.7 360.07)">13/10/2020 - 16/10/2020</text>
<text x="322.9" y="360.04" font-size="4.5" fill="#333" textLength="33.6" lengthAdjust="spacingAndGlyphs" transform="rotate(0.05 322.9 360.04)">- Dương Văn Toàn</text>
<text x="417.35" y="360.27" font-size="4.6" fill="#ad3a34" font-weight="700" text-anchor="middle" textLength="30.6" lengthAdjust="spacingAndGlyphs" stroke="#ad3a34" stroke-width="0.07" transform="rotate(0.05 417.35 360.27)">Chưa thực hiện</text>
<text x="463.35" y="360.27" font-size="4.6" fill="#333" font-weight="700" text-anchor="middle" textLength="32.9" lengthAdjust="spacingAndGlyphs" stroke="#333" stroke-width="0.07" transform="rotate(0.05 463.35 360.27)">Không thực hiện</text>
<rect x="564.3" y="353.9" width="12.5" height="10.6" fill="#f4f4f4" rx="0.9" stroke="#ddd" stroke-width="0.31"/>
<path transform="translate(568.3 356.9) scale(0.3800)" d="M0 12L0.9 8L7.9 1L11 4.1L4 11.1ZM8.7 0.4Q9.6 -0.4 10.5 0.4L11.6 1.5Q12.4 2.4 11.6 3.3L8.7 0.4Z" fill="#333"/>
<rect x="585.45" y="353.9" width="12" height="10.6" fill="#f4f4f4" rx="0.9" stroke="#ddd" stroke-width="0.31"/>
<path transform="translate(589.65 356.7) scale(0.4100)" d="M3.5 0H6.5L7 1H10V2.6H0V1H3ZM0.8 3.4H9.2L8.6 12H1.4Z" fill="#333"/>
<rect x="133.6" y="116.5" width="0.4" height="243" fill="#ededed"/>
<rect x="144.5" y="116.5" width="0.4" height="243" fill="#ededed"/>
<rect x="159" y="116.5" width="0.4" height="243" fill="#ededed"/>
<rect x="258.3" y="116.5" width="0.4" height="243" fill="#ededed"/>
<rect x="320.4" y="116.5" width="0.4" height="243" fill="#ededed"/>
<rect x="394.1" y="116.5" width="0.4" height="243" fill="#ededed"/>
<rect x="440.2" y="132.6" width="0.4" height="226.9" fill="#ededed"/>
<rect x="486.4" y="116.5" width="0.4" height="243" fill="#ededed"/>
<rect x="560.3" y="116.5" width="0.4" height="243" fill="#ededed"/>
<rect x="581" y="116.5" width="0.4" height="243" fill="#ededed"/>
<rect x="601.7" y="116.5" width="0.4" height="243" fill="#ededed"/>
<rect x="627.1" y="116.5" width="0.4" height="31.6" fill="#ededed"/>
<rect x="121" y="313.6" width="1" height="45.9" fill="#1c1c3c"/>
</g>
</svg>
</div>
</body>
</html>
